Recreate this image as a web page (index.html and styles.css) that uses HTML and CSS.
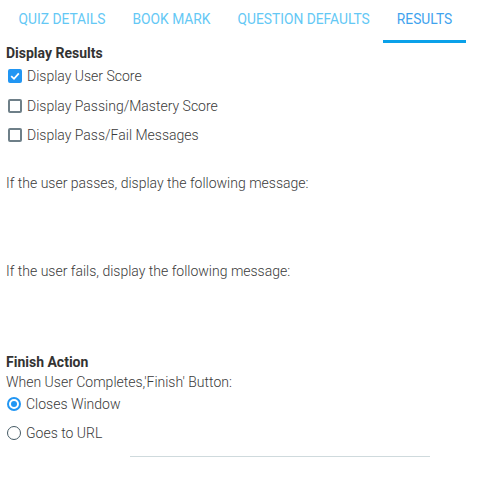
FILE: index.html
```html
<!DOCTYPE html>
<html>
<head>
<meta charset="utf-8">
<link rel="stylesheet" href="styles.css">
</head>
<body>
<div class="tabs">
  <div class="tab">QUIZ DETAILS</div>
  <div class="tab">BOOK MARK</div>
  <div class="tab">QUESTION DEFAULTS</div>
  <div class="tab active">RESULTS</div>
</div>
<div class="content">
  <div class="heading">Display Results</div>
  <label class="option first"><span class="box checked"><svg viewBox="0 0 14 14" width="14" height="14"><path d="M3.2 7.2 L6 9.8 L10.8 4.4" fill="none" stroke="#fff" stroke-width="1.8"/></svg></span>Display User Score</label>
  <label class="option"><span class="box"></span>Display Passing/Mastery Score</label>
  <label class="option"><span class="box"></span>Display Pass/Fail Messages</label>
  <p class="msg pass">If the user passes, display the following message:</p>
  <p class="msg fail">If the user fails, display the following message:</p>
  <div class="heading finish">Finish Action</div>
  <div class="sub">When User Completes,'Finish' Button:</div>
  <label class="option radio-first"><span class="radio checked"></span>Closes Window</label>
  <label class="option"><span class="radio"></span>Goes to URL</label>
  <div class="line"></div>
</div>
</body>
</html>
```
FILE: styles.css
```css
html, body {
  margin: 0;
  padding: 0;
  background: #fff;
  font-family: Roboto, "Liberation Sans", sans-serif;
}
.tabs {
  display: flex;
  padding-left: 5px;
  height: 43px;
}
.tab {
  padding: 11px 13.5px 0 13.5px;
  font-size: 13.8px;
  line-height: 16px;
  color: #64c8f5;
  box-sizing: border-box;
  height: 43px;
}
.tab.active {
  color: #3fa3ee;
  border-bottom: 3px solid #0aa1e9;
}
.content {
  padding-left: 6px;
  color: #444;
}
.heading {
  font-weight: bold;
  font-size: 14px;
  line-height: 16px;
  color: #333;
  margin-top: 2px;
}
.option {
  display: flex;
  align-items: center;
  font-size: 14px;
  font-weight: 300;
  line-height: 16px;
  height: 16px;
  margin-top: 13.5px;
  color: #3a3a3a;
}
.option.first { margin-top: 7px; }
.box {
  width: 14px;
  height: 14px;
  box-sizing: border-box;
  border: 2px solid #6e7f88;
  border-radius: 2px;
  margin: 0 5px 0 2px;
  display: flex;
  align-items: center;
  justify-content: center;
}
.box.checked {
  background: #2196f3;
  border-color: #2196f3;
}
.box svg { display: block; flex: none; }
.msg {
  margin: 0;
  font-size: 14px;
  font-weight: 300;
  color: #3a3a3a;
  line-height: 16px;
}
.msg.pass { margin-top: 32px; }
.msg.fail { margin-top: 72px; }
.finish { margin-top: 75px; }
.sub {
  font-size: 14px;
  font-weight: 300;
  color: #3a3a3a;
  line-height: 16px;
  margin-top: 4px;
}
.radio {
  width: 14px;
  height: 14px;
  box-sizing: border-box;
  border: 1.5px solid #455a64;
  border-radius: 50%;
  margin: 0 5px 0 1px;
  display: flex;
  align-items: center;
  justify-content: center;
}
.radio.checked {
  border: 2px solid #2196f3;
}
.radio.checked::after {
  content: "";
  width: 6px;
  height: 6px;
  border-radius: 50%;
  background: #2196f3;
}
.option.radio-first { margin-top: 5.5px; }
.line {
  margin: 15px 0 0 124px;
  width: 300px;
  height: 1px;
  background: #cfdadd;
}
```
